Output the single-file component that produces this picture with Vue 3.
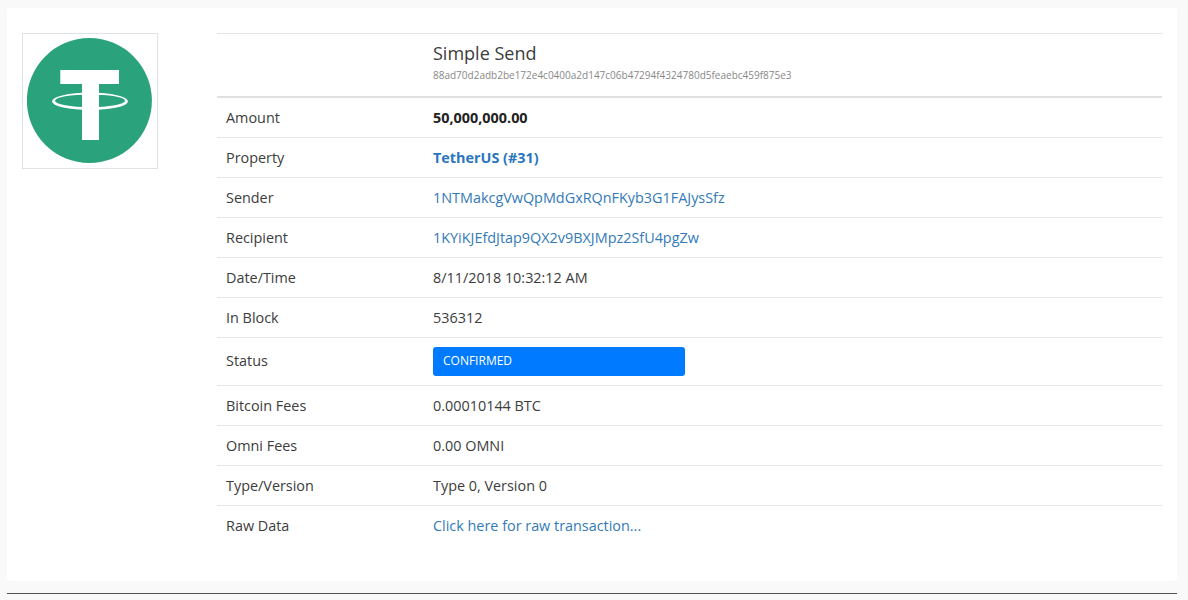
<script setup>
const rows = [
  { label: 'Amount', value: '50,000,000.00', cls: 'bold' },
  { label: 'Property', value: 'TetherUS (#31)', cls: 'link bold' },
  { label: 'Sender', value: '1NTMakcgVwQpMdGxRQnFKyb3G1FAJysSfz', cls: 'link' },
  { label: 'Recipient', value: '1KYiKJEfdJtap9QX2v9BXJMpz2SfU4pgZw', cls: 'link' },
  { label: 'Date/Time', value: '8/11/2018 10:32:12 AM' },
  { label: 'In Block', value: '536312' },
  { label: 'Status', badge: 'CONFIRMED' },
  { label: 'Bitcoin Fees', value: '0.00010144 BTC' },
  { label: 'Omni Fees', value: '0.00 OMNI' },
  { label: 'Type/Version', value: 'Type 0, Version 0' },
  { label: 'Raw Data', value: 'Click here for raw transaction...', cls: 'link' }
]
</script>

<template>
  <div class="page">
    <main class="card">
      <div class="logo-box">
        <svg class="logo" viewBox="0 0 126 126" width="126" height="126" role="img" aria-label="Tether">
          <circle cx="62.4" cy="62.6" r="62.5" fill="#2aa37c" />
          <path d="M33.3 32H92V46H72V102H55V46H33.3z" fill="#fff" />
          <path fill="#fff" fill-rule="evenodd" d="M25 63.3a38 8.7 0 1 0 76 0a38 8.7 0 1 0 -76 0z M28 62.8a35 6.4 0 1 0 70 0a35 6.4 0 1 0 -70 0z" />
        </svg>
      </div>
      <section class="details">
        <header class="head">
          <div class="head-text">
            <h1>Simple Send</h1>
            <p>88ad70d2adb2be172e4c0400a2d147c06b47294f4324780d5feaebc459f875e3</p>
          </div>
        </header>
        <div v-for="row in rows" :key="row.label" class="row" :class="{ tall: row.badge }">
          <div class="label">{{ row.label }}</div>
          <div class="value" :class="row.cls">
            <span v-if="row.badge" class="badge">{{ row.badge }}</span>
            <template v-else>{{ row.value }}</template>
          </div>
        </div>
      </section>
    </main>
    <hr class="rule" />
  </div>
</template>

<style>
html, body { margin: 0; background: #f9f9f9; }
</style>

<style scoped>
.page {
  height: 600px;
  overflow: hidden;
  padding: 8px 11px 0 7px;
  box-sizing: border-box;
  font-family: "Open Sans", "Noto Sans", sans-serif;
  font-size: 14.4px;
  color: #3c3c3c;
}
.card {
  display: flex;
  align-items: flex-start;
  height: 573px;
  box-sizing: border-box;
  padding: 25px 15px 0 15px;
  background: #fff;
  border-radius: 4px;
}
.logo-box {
  width: 136px;
  height: 136px;
  box-sizing: border-box;
  border: 1px solid #e2e2e2;
  display: flex;
  align-items: center;
  justify-content: center;
  background: #fff;
  flex: none;
  margin-right: 59px;
}
.details { flex: 1; }
.head {
  height: 65px;
  box-sizing: border-box;
  border-top: 1px solid #e4e4e4;
  border-bottom: 2px solid #e0e0e0;
  padding-left: 216px;
}
.head-text { padding-top: 7px; }
h1 {
  margin: 0;
  font-size: 18px;
  font-weight: 400;
  line-height: 24px;
  color: #3c3c3c;
}
.head p {
  margin: 4px 0 0;
  font-size: 10px;
  line-height: 13px;
  color: #888;
}
.row {
  display: flex;
  align-items: center;
  height: 40px;
  box-sizing: border-box;
  border-bottom: 1px solid #e6e6e6;
}
.row:last-child { border-bottom-color: transparent; }
.row.tall { height: 48px; }
.row.tall .label { margin-bottom: 2px; }
.label { width: 216px; padding-left: 9px; box-sizing: border-box; flex: none; }
.value { flex: 1; }
.bold { font-weight: 700; color: #222; }
.link { color: #337ab7; }
.link.bold { color: #2a76c0; }
.badge {
  display: flex;
  align-items: center;
  width: 252px;
  height: 29px;
  box-sizing: border-box;
  padding: 0 0 2px 10px;
  background: #007bff;
  color: #fff;
  font-size: 12px;
  border-radius: 3px;
}
.rule {
  margin: 12px 0 0;
  border: 0;
  border-top: 1px solid #555;
  width: 1170px;
}
</style>
